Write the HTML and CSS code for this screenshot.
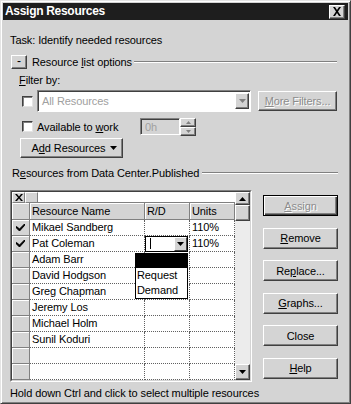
FILE: index.html
```html
<!DOCTYPE html>
<html>
<head>
<meta charset="utf-8">
<link rel="stylesheet" href="styles.css">
</head>
<body>
<div class="window">
  <div class="titlebar">
    <span class="title">Assign Resources</span>
    <span class="close"><svg width="10" height="9" viewBox="0 0 10 9"><path d="M1 0h2l2 3 2-3h2L6 4.5 9 9H7L5 6 3 9H1l3-4.5z" fill="#000"/></svg></span>
  </div>
  <div class="content">
    <div class="task">Task: Identify needed resources</div>
    <div class="options">
      <span class="mini">-</span>
      <span class="opt-label">Resource <u>l</u>ist options</span>
      <span class="rule"></span>
    </div>
    <div class="filter-label"><u>F</u>ilter by:</div>
    <div class="filter-row">
      <span class="check"></span>
      <div class="combo">
        <span class="combo-text">All Resources</span>
        <span class="dd-btn"><svg width="7" height="4" viewBox="0 0 7 4"><path d="M0 0h7L3.5 4z" fill="#808080"/></svg></span>
      </div>
      <span class="btn disabled more"><span><u>M</u>ore Filters...</span></span>
    </div>
    <div class="avail-row">
      <span class="check"></span>
      <span class="avail-label">Available to <u>w</u>ork</span>
      <div class="spin-input">0h</div>
      <div class="spinner">
        <span class="spin-btn"><svg width="5" height="3" viewBox="0 0 5 3"><path d="M0 3h5L2.5 0z" fill="#808080"/></svg></span>
        <span class="spin-btn"><svg width="5" height="3" viewBox="0 0 5 3"><path d="M0 0h5L2.5 3z" fill="#808080"/></svg></span>
      </div>
    </div>
    <span class="btn add"><span>A<u>d</u>d Resources</span><svg width="7" height="4" viewBox="0 0 7 4"><path d="M0 0h7L3.5 4z" fill="#000"/></svg></span>
    <div class="section">
      <span class="sec-label">R<u>e</u>sources from Data Center.Published</span>
      <span class="rule"></span>
    </div>
    <div class="main">
      <div class="grid">
        <div class="grid-inner">
          <div class="table">
            <div class="toolbar">
              <span class="tb-btn"><svg width="8" height="7" viewBox="0 0 8 7"><path d="M0 0h2l2 2.5L6 0h2L5 3.5 8 7H6L4 4.5 2 7H0l3-3.5z" fill="#000"/></svg></span>
              <span class="tb-btn"></span>
              <span class="tb-edit"></span>
            </div>
            <div class="row head">
              <span class="sel"></span>
              <span class="hc name">Resource Name</span>
              <span class="hc rd">R/D</span>
              <span class="hc units">Units</span>
            </div>
            <div class="row">
              <span class="sel"><svg width="9" height="8" viewBox="0 0 9 8"><path d="M0.5 4l3 3L8.5 1.5V0L3.5 5 0.5 2.5z" fill="#000" stroke="#000" stroke-width="1"/></svg></span>
              <span class="c name">Mikael Sandberg</span><span class="c rd"></span><span class="c units">110%</span>
            </div>
            <div class="row">
              <span class="sel"><svg width="9" height="8" viewBox="0 0 9 8"><path d="M0.5 4l3 3L8.5 1.5V0L3.5 5 0.5 2.5z" fill="#000" stroke="#000" stroke-width="1"/></svg></span>
              <span class="c name">Pat Coleman</span>
              <span class="c rd editing"><span class="editor"><span class="caret"></span><span class="ed-btn"><svg width="7" height="4" viewBox="0 0 7 4"><path d="M0 0h7L3.5 4z" fill="#000"/></svg></span></span></span>
              <span class="c units">110%</span>
            </div>
            <div class="row"><span class="sel"></span><span class="c name">Adam Barr</span><span class="c rd"></span><span class="c units"></span></div>
            <div class="row"><span class="sel"></span><span class="c name">David Hodgson</span><span class="c rd"></span><span class="c units"></span></div>
            <div class="row"><span class="sel"></span><span class="c name">Greg Chapman</span><span class="c rd"></span><span class="c units"></span></div>
            <div class="row"><span class="sel"></span><span class="c name">Jeremy Los</span><span class="c rd"></span><span class="c units"></span></div>
            <div class="row"><span class="sel"></span><span class="c name">Michael Holm</span><span class="c rd"></span><span class="c units"></span></div>
            <div class="row"><span class="sel"></span><span class="c name">Sunil Koduri</span><span class="c rd"></span><span class="c units"></span></div>
            <div class="row"><span class="sel"></span><span class="c name"></span><span class="c rd"></span><span class="c units"></span></div>
            <div class="row"><span class="sel"></span><span class="c name"></span><span class="c rd"></span><span class="c units"></span></div>
          </div>
          <div class="scrollbar">
            <span class="sb-btn up"><svg width="7" height="4" viewBox="0 0 7 4"><path d="M0 4h7L3.5 0z" fill="#000"/></svg></span>
            <span class="sb-thumb"></span>
            <span class="sb-track"></span>
            <span class="sb-btn down"><svg width="7" height="4" viewBox="0 0 7 4"><path d="M0 0h7L3.5 4z" fill="#000"/></svg></span>
          </div>
        </div>
        <div class="dropdown">
          <div class="dd-item sel-item"></div>
          <div class="dd-item">Request</div>
          <div class="dd-item">Demand</div>
        </div>
      </div>
      <div class="buttons">
        <span class="btn side default disabled"><span><u>A</u>ssign</span></span>
        <span class="btn side"><span><u>R</u>emove</span></span>
        <span class="btn side"><span>Re<u>p</u>lace...</span></span>
        <span class="btn side"><span><u>G</u>raphs...</span></span>
        <span class="btn side"><span>Close</span></span>
        <span class="btn side"><span><u>H</u>elp</span></span>
      </div>
    </div>
    <div class="status">Hold down Ctrl and click to select multiple resources</div>
  </div>
</div>
</body>
</html>
```
FILE: styles.css
```css
* { box-sizing: border-box; }
body {
  margin: 0;
  font-family: "Liberation Sans", Arial, sans-serif;
  font-size: 11px;
  letter-spacing: -0.1px;
  color: #000;
}
.window {
  width: 351px;
  height: 404px;
  background: #d4d4d4;
  border: 1px solid;
  border-color: #e4e4e4 #404040 #404040 #e4e4e4;
  box-shadow: inset 1px 1px #fff, inset -1px -1px #808080;
  padding: 2px;
}
.titlebar {
  height: 17px;
  background: #1e1e1e;
  display: flex;
  align-items: center;
  justify-content: space-between;
  padding: 0 3px 0 2px;
}
.title {
  color: #fff;
  font-weight: bold;
  font-size: 12px;
  letter-spacing: -0.3px;
  line-height: 17px;
}
.close {
  width: 16px;
  height: 14px;
  background: #d4d4d4;
  border: 1px solid;
  border-color: #fff #404040 #404040 #fff;
  box-shadow: inset -1px -1px #808080;
  display: flex;
  align-items: center;
  justify-content: center;
  padding-bottom: 1px;
}
.content {
  padding: 0 11px 0 7px;
  display: flex;
  flex-direction: column;
  align-items: flex-start;
}
.task {
  margin-top: 13px;
  line-height: 14px;
}
.options {
  margin-top: 8px;
  height: 14px;
  display: flex;
  align-items: center;
  align-self: stretch;
}
.mini {
  margin-left: 1px;
  width: 16px;
  height: 14px;
  border: 1px solid;
  border-color: #fff #404040 #404040 #fff;
  box-shadow: inset -1px -1px #808080;
  display: flex;
  align-items: center;
  justify-content: center;
  font-size: 12px;
  line-height: 1;
  padding-bottom: 2px;
}
.opt-label { margin-left: 5px; line-height: 14px; }
.rule {
  flex: 1;
  height: 2px;
  border-top: 1px solid #808080;
  border-bottom: 1px solid #fff;
  margin-left: 2px;
}
.filter-label {
  margin-top: 4px;
  margin-left: 9px;
  line-height: 14px;
}
.filter-row {
  margin-top: 3px;
  height: 22px;
  display: flex;
  align-items: center;
}
.check {
  width: 11px;
  height: 11px;
  background: #fff;
  border: 1px solid;
  border-color: #404040 #e4e4e4 #e4e4e4 #404040;
  box-shadow: inset 1px 1px #808080;
}
.filter-row .check { margin-left: 12px; }
.combo {
  margin-left: 4px;
  width: 214px;
  height: 22px;
  background: #fff;
  border: 1px solid;
  border-color: #808080 #fff #fff #808080;
  box-shadow: inset 1px 1px #404040;
  display: flex;
  align-items: center;
  justify-content: space-between;
  padding: 2px 1px 2px 4px;
}
.combo-text { color: #a0a0a0; }
.dd-btn {
  width: 14px;
  height: 16px;
  background: #d4d4d4;
  border: 1px solid;
  border-color: #fff #404040 #404040 #fff;
  box-shadow: inset -1px -1px #808080;
  display: flex;
  align-items: center;
  justify-content: center;
}
.btn {
  background: #d4d4d4;
  border: 1px solid;
  border-color: #fff #404040 #404040 #fff;
  box-shadow: inset -1px -1px #808080;
  display: flex;
  align-items: center;
  justify-content: center;
  line-height: 14px;
  white-space: nowrap;
}
.disabled {
  color: #8c8c8c;
  text-shadow: 1px 1px #fff;
}
.more {
  margin-left: 7px;
  width: 79px;
  height: 20px;
}
.avail-row {
  margin-top: 5px;
  height: 19px;
  display: flex;
  align-items: center;
}
.avail-row .check { margin-left: 12px; }
.avail-label {
  margin-left: 4px;
  width: 103px;
  line-height: 14px;
}
.spin-input {
  width: 40px;
  height: 17px;
  background: #d4d4d4;
  border: 1px solid;
  border-color: #808080 #fff #fff #808080;
  box-shadow: inset 1px 1px #404040;
  color: #a0a0a0;
  padding: 1px 0 0 4px;
  line-height: 14px;
}
.spinner {
  width: 16px;
  height: 18px;
  display: flex;
  flex-direction: column;
}
.spin-btn {
  flex: 1;
  border: 1px solid;
  border-color: #fff #404040 #404040 #fff;
  box-shadow: inset -1px -1px #808080;
  display: flex;
  align-items: center;
  justify-content: center;
}
.add {
  margin-top: 2px;
  margin-left: 10px;
  width: 103px;
  height: 20px;
  gap: 5px;
  padding-left: 6px;
}
.section {
  margin-top: 8px;
  height: 14px;
  display: flex;
  align-items: center;
  align-self: stretch;
}
.sec-label { margin-left: 2px; line-height: 14px; }
.section .rule { margin-left: 3px; margin-right: -1px; }
.main {
  margin-top: 10px;
  display: flex;
  align-items: flex-start;
}
.grid {
  position: relative;
  width: 242px;
  height: 192px;
  border: 1px solid;
  border-color: #808080 #fff #fff #808080;
}
.grid-inner {
  height: 100%;
  border: 1px solid;
  border-color: #404040 #d4d4d4 #d4d4d4 #404040;
  display: flex;
  background: #fff;
}
.table {
  width: 223px;
  display: flex;
  flex-direction: column;
}
.toolbar {
  height: 11px;
  display: flex;
  background: #fff;
}
.tb-btn {
  width: 13px;
  height: 11px;
  background: #d4d4d4;
  border: 1px solid;
  border-color: #fff #808080 #808080 #fff;
  display: flex;
  align-items: center;
  justify-content: center;
}
.tb-edit {
  flex: 1;
  border-bottom: 1px solid #808080;
}
.row {
  display: flex;
  height: 16px;
}
.row.head { height: 17px; }
.sel {
  width: 18px;
  flex: none;
  background: #d4d4d4;
  border-right: 1px solid #808080;
  border-bottom: 1px solid #808080;
  box-shadow: inset 1px 1px #fff;
  display: flex;
  align-items: center;
  justify-content: center;
}
.hc {
  background: #d4d4d4;
  border-right: 1px solid #808080;
  border-bottom: 1px solid #808080;
  box-shadow: inset 1px 1px #fff;
  padding-left: 2px;
  line-height: 16px;
}
.name { width: 115px; }
.rd { width: 45px; }
.units { width: 45px; }
.c {
  background: #fff;
  border-right: 1px dotted #606060;
  border-bottom: 1px dotted #606060;
  padding-left: 2px;
  line-height: 15px;
  white-space: nowrap;
}
.editing { padding-left: 0; }
.editor {
  display: flex;
  justify-content: space-between;
  align-items: stretch;
  width: 43px;
  height: 16px;
  border: 1px solid #000;
  background: #fff;
}
.caret {
  width: 1px;
  height: 11px;
  background: #000;
  margin: 1px 0 0 4px;
}
.ed-btn {
  width: 13px;
  background: #d4d4d4;
  border: 1px solid;
  border-color: #fff #404040 #404040 #fff;
  display: flex;
  align-items: center;
  justify-content: center;
}
.scrollbar {
  width: 15px;
  display: flex;
  flex-direction: column;
  background: #ececec;
}
.sb-btn, .sb-thumb {
  background: #d4d4d4;
  border: 1px solid;
  border-color: #fff #404040 #404040 #fff;
  box-shadow: inset -1px -1px #808080;
  display: flex;
  align-items: center;
  justify-content: center;
}
.sb-btn.up { height: 13px; }
.sb-thumb { height: 16px; }
.sb-track { flex: 1; }
.sb-btn.down { height: 16px; }
.dropdown {
  position: absolute;
  left: 124px;
  top: 62px;
  width: 53px;
  height: 46px;
  background: #fff;
  border: 1px solid #000;
}
.dd-item {
  height: 15px;
  line-height: 15px;
  padding-left: 1px;
}
.dd-item.sel-item {
  height: 14px;
  background: #000;
}
.buttons {
  margin-left: 11px;
  margin-top: 5px;
  display: flex;
  flex-direction: column;
  gap: 11.6px;
}
.side {
  width: 75px;
  height: 21px;
}
.default {
  border: 1px solid #000;
  box-shadow: inset 1px 1px #fff, inset -1px -1px #404040, inset -2px -2px #808080;
}
.status {
  margin-top: 4px;
  line-height: 14px;
}
```
